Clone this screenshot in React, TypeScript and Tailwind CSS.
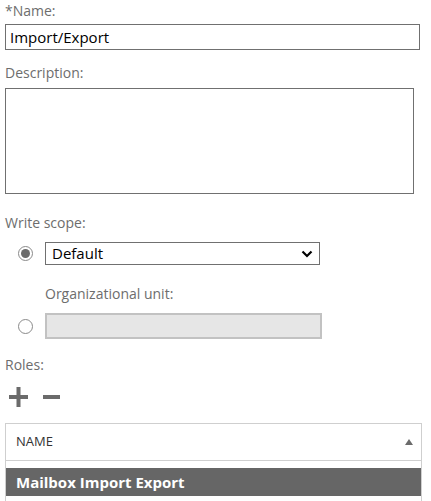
import React from "react";

export default function App() {
  return (
    <div
      className="w-[431px] h-[501px] overflow-hidden bg-white px-[5px]"
      style={{ fontFamily: '"Open Sans", "Noto Sans", sans-serif' }}
    >
      <div className="h-[20px] leading-[20px] text-[14px] text-[#6d6d6d] mt-[1px]">*Name:</div>
      <div className="mt-[3px] w-[415px] h-[26px] border border-[#707070] flex items-center px-[4px] text-[15px] text-black">
        Import/Export
      </div>
      <div className="mt-[13px] h-[20px] leading-[20px] text-[14px] text-[#6d6d6d]">Description:</div>
      <div className="mt-[5px] w-[409px] h-[106px] border border-[#707070]" />
      <div className="mt-[19px] h-[20px] leading-[20px] text-[14px] text-[#6d6d6d]">Write scope:</div>
      <div className="mt-[9px] flex items-center">
        <div className="w-[40px] flex justify-center">
          <div className="w-[15px] h-[15px] rounded-full border border-[#8a8a8a] flex items-center justify-center">
            <div className="w-[9px] h-[9px] rounded-full bg-[#6b6b6b]" />
          </div>
        </div>
        <div className="w-[275px] h-[23px] border border-[#707070] flex items-center justify-between pl-[6px] pr-[6px] text-[15px] text-black">
          <span>Default</span>
          <svg width="12" height="8" viewBox="0 0 12 8">
            <path d="M1.5 1.5 L6 6 L10.5 1.5" fill="none" stroke="#000" strokeWidth="2.2" />
          </svg>
        </div>
      </div>
      <div className="mt-[19px] ml-[40px] h-[20px] leading-[20px] text-[14px] text-[#6d6d6d]">Organizational unit:</div>
      <div className="mt-[9px] flex items-center">
        <div className="w-[40px] flex justify-center">
          <div className="w-[15px] h-[15px] rounded-full border border-[#8a8a8a]" />
        </div>
        <div className="w-[277px] h-[26px] border-2 border-[#c2c2c2] bg-[#e6e6e6]" />
      </div>
      <div className="mt-[16px] h-[20px] leading-[20px] text-[14px] text-[#6d6d6d]">Roles:</div>
      <div className="mt-[12px] flex items-center h-[20px]">
        <svg width="20" height="20" viewBox="0 0 20 20" className="ml-[4px]">
          <rect x="0" y="8" width="19" height="4" fill="#6b6b6b" />
          <rect x="7.5" y="0" width="4" height="20" fill="#6b6b6b" />
        </svg>
        <svg width="18" height="4" viewBox="0 0 18 4" className="ml-[14px]">
          <rect x="0" y="0" width="17" height="4" fill="#6b6b6b" />
        </svg>
      </div>
      <div className="mt-[16px] w-[417px]">
        <div className="h-[38px] border border-[#cfcfcf] flex items-center justify-between pl-[10px] pr-[7px]">
          <span className="text-[13px] text-[#333]">NAME</span>
          <svg width="10" height="8" viewBox="0 0 10 8">
            <path d="M5 1 L9 7 L1 7 Z" fill="#6b6b6b" />
          </svg>
        </div>
        <div className="border-x border-[#cfcfcf] pt-[7px] h-[60px]">
          <div className="h-[28px] bg-[#666666] flex items-center pl-[10px] text-[15px] font-bold text-white">
            Mailbox Import Export
          </div>
        </div>
      </div>
    </div>
  );
}
